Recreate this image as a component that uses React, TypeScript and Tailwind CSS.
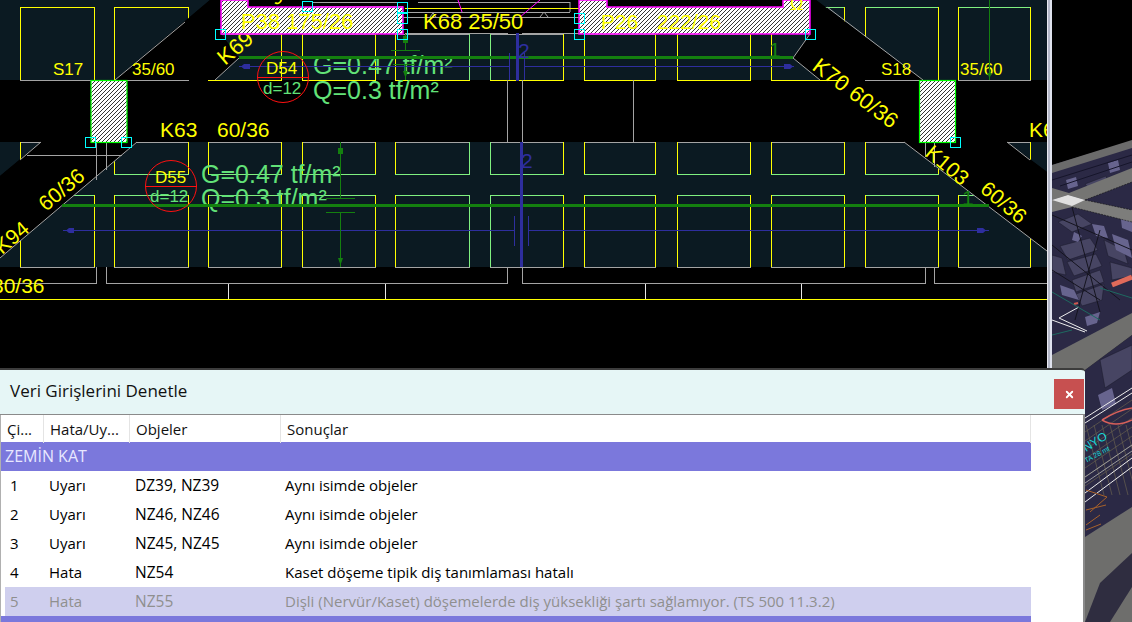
import { X } from "lucide-react"

const YEL = "#ffff00"
const LGR = "#80f080"
const GRY = "#a4a4a4"
const SLAB = "#0b1a22"
const DIM = "#14800f"
const BLU = "#2e2e9e"
const CYA = "#00ffff"
const MAG = "#ff00ff"
const TXT = "#62e278"

const cols = [
  [20, 94], [114, 188], [208, 281], [302, 375], [395, 469], [490, 563],
  [584, 655], [677, 750], [771, 844], [865, 938], [958, 1030],
]

// x0, x1, y0, y1, top, left, right, bottom
type Cell = [number, number, number, number, string, string, string, string]

function buildCells(): Cell[] {
  const out: Cell[] = []
  cols.forEach(([a, b], i) => {
    const l = i === 5 ? LGR : YEL
    const r = i === 4 ? LGR : YEL
    out.push([a, b, 142, 174, GRY, l, r, LGR])
    out.push([a, b, 195, 267, LGR, l, r, GRY])
    if (i < 2) out.push([a, b, 7, 80, YEL, YEL, YEL, GRY])
    else if (i < 8) out.push([a, b, 34, 80, GRY, l, r, YEL])
    else if (i === 8) out.push([a, b, 7, 80, LGR, YEL, YEL, YEL])
    else out.push([a, b, 7, 80, LGR, YEL, YEL, GRY])
  })
  return out
}

function CellBox({ c }: { c: Cell }) {
  const [a, b, t, u, top, l, r, bot] = c
  return (
    <g strokeWidth="1">
      <line x1={a} y1={t + 0.5} x2={b + 1} y2={t + 0.5} stroke={top} />
      <line x1={a + 0.5} y1={t} x2={a + 0.5} y2={u} stroke={l} />
      <line x1={b + 0.5} y1={t} x2={b + 0.5} y2={u} stroke={r} />
      <line x1={a} y1={u + 0.5} x2={b + 1} y2={u + 0.5} stroke={bot} />
    </g>
  )
}

function Label(props: { x: number; y: number; size: number; fill?: string; rot?: number; children: string }) {
  const { x, y, size, fill = YEL, rot, children } = props
  return (
    <text
      x={x}
      y={y}
      fontSize={size}
      fill={fill}
      className="font-['Liberation_Sans',sans-serif]"
      transform={rot ? `rotate(${rot} ${x} ${y})` : undefined}
    >
      {children}
    </text>
  )
}

const squares = [
  [215, 29], [302, 1], [397, 2], [397, 13], [397, 29], [574, 13], [574, 29], [805, 29],
  [85, 137], [121, 137], [950, 137],
]

const grayLines = [
  // plan edges
  [185, 22, 115, 80], [215, 80, 239, 58], [793, 58, 820, 80], [810, 34, 793, 58], [827, 7, 923, 80],
  [137, 142, 0, 258], [41, 142, 20, 160], [904, 142, 1047, 251], [1007, 142, 1030, 160],
  // walls between bands
  [507.5, 80, 507.5, 142], [522.5, 80, 522.5, 142], [633.5, 80, 633.5, 142],
  [507.5, 267, 507.5, 283], [522.5, 267, 522.5, 283],
  [96.5, 142, 96.5, 180], [106.5, 142, 106.5, 170], [27, 155.5, 122, 155.5],
  [925.5, 142, 925.5, 157], [934.5, 142, 934.5, 167],
  [96.5, 267, 96.5, 283.5], [0, 283.5, 97, 283.5], [106.5, 267, 106.5, 283.5], [106, 283.5, 508, 283.5],
  [522, 283.5, 926, 283.5], [925.5, 267, 925.5, 283.5], [934.5, 267, 934.5, 283.5], [934, 283.5, 1047, 283.5],
  // top gap between walls
  [405, 33.5, 508, 33.5], [522, 33.5, 579, 33.5], [313, 2.5, 403, 2.5], [313, 6.5, 403, 6.5],
  [403, 12.5, 570, 12.5], [403, 17.5, 579, 17.5], [570, 2, 570, 12], [418, 2.5, 570, 2.5],
]

function Plan() {
  return (
    <svg width="1047" height="622" viewBox="0 0 1047 622" className="block shrink-0 w-[1047px] h-[622px]">
      <defs>
        <pattern id="hatch" width="4" height="4" patternUnits="userSpaceOnUse">
          <rect width="4" height="4" fill="#fff" />
          <path d="M-1 1L1 -1M0 4L4 0M3 5L5 3" stroke="#000" strokeWidth="0.8" />
        </pattern>
      </defs>

      <polygon points="0,0 210,0 115,80 0,80" fill={SLAB} />
      <polygon points="221,34 810,34 793,58 820,80 215,80 239,58" fill={SLAB} />
      <polygon points="816,0 1047,0 1047,80 923,80" fill={SLAB} />
      <polygon points="0,142 41,142 0,176" fill={SLAB} />
      <polygon points="137,142 904,142 1047,251 1047,267 0,267 0,258" fill={SLAB} />
      <polygon points="1007,142 1047,142 1047,172" fill={SLAB} />

      {buildCells().map((c, i) => (
        <CellBox key={i} c={c} />
      ))}

      {/* beams cut over the slab cells */}
      <polygon points="210,0 221,0 221,34 239,58 215,80 115,80" fill="#000" />
      <polygon points="816,0 923,80 820,80 793,58 810,34 810,0" fill="#000" />
      <polygon points="41,142 137,142 0,258 0,176" fill="#000" />
      <polygon points="904,142 1007,142 1047,172 1047,251" fill="#000" />

      {grayLines.map((l, i) => (
        <line key={i} x1={l[0]} y1={l[1]} x2={l[2]} y2={l[3]} stroke={GRY} strokeWidth="1" />
      ))}
      <line x1="405" y1="8.5" x2="579" y2="8.5" stroke={YEL} />
      <path d="M458 0L462 12M540 0L520 17" stroke={MAG} fill="none" />
      <path d="M540 17l4 -5 4 5M430 17l3 -4 3 4" stroke={GRY} fill="none" />
      {[228.5, 385.5, 645.5, 801.5].map((x) => (
        <line key={x} x1={x} y1="284" x2={x} y2="299" stroke="#e8e8e8" />
      ))}
      <line x1="0" y1="299.5" x2="1047" y2="299.5" stroke={YEL} />

      <Label x={225} y={66} size={22} rot={-40}>K69</Label>
      <Label x={276} y={6} size={18} rot={-40}>30/36</Label>

      {/* wall hatching */}
      <polygon points="221,0 221,34 403,34 403,7 248,7 248,0" fill="url(#hatch)" stroke={MAG} strokeWidth="1.5" />
      <polygon points="579,0 579,34 810,34 810,0 783,0 783,7 607,7 607,0" fill="url(#hatch)" stroke={MAG} strokeWidth="1.5" />
      <rect x="91" y="80.5" width="36" height="62" fill="url(#hatch)" stroke="#00ff00" strokeWidth="1.2" />
      <rect x="919.5" y="80.5" width="36" height="62" fill="url(#hatch)" stroke="#00ff00" strokeWidth="1.2" />

      <Label x={241} y={29} size={22}>P38 175/26</Label>
      <Label x={601} y={29} size={21}>P26</Label>
      <Label x={657} y={29} size={21}>222/26</Label>
      <Label x={790} y={10} size={18}>Ω</Label>
      <Label x={423} y={29} size={22}>K68 25/50</Label>
      <Label x={53} y={75} size={17}>S17</Label>
      <Label x={132} y={75} size={17}>35/60</Label>
      <Label x={881} y={75} size={17}>S18</Label>
      <Label x={960} y={75} size={17}>35/60</Label>
      <Label x={160} y={137} size={21}>K63</Label>
      <Label x={217} y={137} size={21}>60/36</Label>
      <Label x={1029} y={137} size={21}>K6</Label>
      <Label x={-8} y={293} size={21}>30/36</Label>
      <Label x={2} y={255} size={21} rot={-40}>K94</Label>
      <Label x={46} y={212} size={21} rot={-40}>60/36</Label>
      <Label x={811} y={69} size={22} rot={37}>K70 60/36</Label>
      <Label x={924} y={155} size={21} rot={40}>K103</Label>
      <Label x={979} y={191} size={21} rot={40}>60/36</Label>

      <Label x={313} y={74} size={25} fill={TXT}>G=0.47 tf/m²</Label>
      <Label x={313} y={99} size={25} fill={TXT}>Q=0.3 tf/m²</Label>
      <Label x={201} y={183} size={25} fill={TXT}>G=0.47 tf/m²</Label>
      <Label x={201} y={207} size={25} fill={TXT}>Q=0.3 tf/m²</Label>

      {/* slab span lines */}
      <rect x="239" y="56" width="554" height="3" fill={DIM} />
      <rect x="62" y="204" width="927" height="3" fill={DIM} />
      <line x1="239" y1="66.5" x2="509" y2="66.5" stroke={BLU} />
      <line x1="524" y1="66.5" x2="794" y2="66.5" stroke={BLU} />
      <line x1="63" y1="230.5" x2="514" y2="230.5" stroke={BLU} />
      <line x1="528" y1="230.5" x2="989" y2="230.5" stroke={BLU} />
      <path d="M241 66.5l3 -2.5h6v5h-6zM793 66.5l-3 -2.5h-6v5h6zM66 230.5l3 -2.5h5v5h-5zM986 230.5l-3 -2.5h-6v5h6z" fill={BLU} />
      <path d="M509.5 53V80M524.5 53V80M514.5 216V246M528.5 216V246" stroke={BLU} fill="none" />
      <rect x="516" y="33" width="3" height="48" fill={BLU} />
      <rect x="520" y="142" width="3" height="125" fill={BLU} />
      <Label x={518} y={58} size={21} fill={BLU}>2</Label>
      <Label x={521} y={168} size={21} fill={BLU}>2</Label>
      <Label x={769} y={57} size={21} fill={DIM}>1</Label>
      <Label x={962} y={205} size={21} fill={DIM}>1</Label>

      {/* vertical spans */}
      <path
        d="M405.5 34V50M391 50.5H420M393 64.5H415M405.5 64V80M340.5 142V198M326 198.5H355M326 212.5H355M340.5 212V267M989.5 0V80"
        stroke={DIM}
        fill="none"
      />
      <path d="M403 36h5v7h-5zM403 71h5l-2.5 7zM338 148h5v6h-5zM338 258h5l-2.5 7zM987 73h5l-2.5 5z" fill={DIM} />

      {/* section circles */}
      <Label x={266} y={74} size={17}>D54</Label>
      <Label x={263} y={94} size={17} fill={TXT}>d=12</Label>
      <circle cx="283" cy="77" r="25.5" fill="none" stroke="#ff1010" />
      <line x1="257.5" y1="77.5" x2="308.5" y2="77.5" stroke="#ff1010" />
      <Label x={155} y={183} size={17}>D55</Label>
      <Label x={150} y={202} size={17} fill={TXT}>d=12</Label>
      <circle cx="171" cy="186" r="25.5" fill="none" stroke="#ff1010" />
      <line x1="145.5" y1="186.5" x2="196.5" y2="186.5" stroke="#ff1010" />

      {squares.map(([x, y], i) => (
        <rect key={i} x={x + 0.5} y={y + 0.5} width="10" height="10" fill="none" stroke={CYA} />
      ))}
    </svg>
  )
}

const lightBlocks = [
  "1066,180 1076,177 1078,186 1068,189",
  "1108,163 1118,160 1120,170 1110,173",
  "1120,212 1132,216 1132,232 1122,228",
  "1092,224 1104,226 1108,238 1096,236",
  "1074,232 1082,236 1078,242 1072,240",
  "1085,317 1100,312 1097,323 1087,326",
  "1060,285 1074,290 1079,300 1062,295",
  "1112,234 1128,240 1132,258 1116,250",
  "1098,395 1112,388 1116,404 1102,410",
]
const midBlocks = [
  "1058,222 1078,214 1092,224 1072,232",
  "1060,246 1090,238 1098,250 1068,260",
  "1067,262 1096,254 1102,266 1074,276",
  "1072,280 1100,270 1104,282 1076,292",
  "1076,294 1104,284 1102,300 1082,306",
  "1104,240 1124,250 1128,264 1108,256",
  "1052,255 1062,258 1066,275 1052,272",
  "1110,262 1132,268 1132,276 1112,280",
  "1085,184 1106,176 1108,182 1090,190",
  "1100,360 1132,345 1132,370 1105,388",
]

function Model() {
  const grid: string[] = []
  for (let i = 0; i < 7; i++) {
    grid.push(`M1085 ${432 + i * 9}L1132 ${400 + i * 9}`)
    grid.push(`M${1086 + i * 8} 425L${1104 + i * 8} 495`)
  }
  return (
    <svg width="80" height="622" viewBox="1052 0 80 622" className="block shrink-0 w-[80px] h-[622px]">
      <rect x="1052" width="80" height="622" fill="#000" />
      {/* purple floor */}
      <polygon points="1052,165 1132,141 1132,320 1052,360" fill="#2b2945" />
      <polygon points="1085,370 1132,335 1132,510 1085,540" fill="#2b2945" />
      {midBlocks.map((p) => (
        <polygon key={p} points={p} fill="#474563" stroke="#1b1a2a" strokeWidth="0.5" />
      ))}
      {lightBlocks.map((p) => (
        <polygon key={p} points={p} fill="#67648e" />
      ))}
      <path d="M1052 215L1132 250M1052 245L1120 300M1052 270L1100 300M1072 207L1100 312M1100 230L1075 320" stroke="#15141f" fill="none" />
      <path d="M1052 180L1132 155M1060 186L1132 162" stroke="#16152a" fill="none" />

      {/* beams */}
      <polygon points="1052,165 1132,140 1132,148 1052,173" fill="#6b6b6b" />
      <polygon points="1052,188 1069,193 1132,168 1132,182 1085,200 1068,195 1052,200" fill="#757573" />
      <polygon points="1085,200 1132,210 1132,222 1072,207 1052,212 1052,200 1068,195" fill="#7d7d7b" />
      <polygon points="1052,200 1068,195 1085,200 1072,206" fill="#e0e0e0" />
      <path d="M1085 200L1132 210M1072 207L1132 222M1085 200L1132 182" stroke="#111" strokeWidth="0.6" strokeDasharray="2 1" fill="none" />
      <polygon points="1052,355 1132,313 1132,335 1085,370 1052,372" fill="#6f6f6d" />
      <polygon points="1085,537 1132,507 1132,622 1085,622" fill="#6e6e6c" />
      <polygon points="1100,583 1132,553 1132,587 1110,622 1085,622" fill="#2f2d40" />

      <path d={grid.join("")} stroke="#67604f" strokeWidth="0.7" fill="none" />
      <path d="M1112 285L1132 277" stroke="#e06a5a" strokeWidth="5" fill="none" />
      <path d="M1079 307L1059 318L1087 331M1052 320L1085 332" stroke="#eee" fill="none" />
      <line x1="1074" y1="304" x2="1078" y2="303" stroke="#d05a50" strokeWidth="2" />
      <path d="M1052 335L1072 330M1100 288L1132 298M1052 292L1100 320" stroke="#1e6a60" fill="none" />

      <path d="M1085 418L1132 388M1085 423L1132 393M1085 493L1132 458M1085 502L1132 467" stroke="#ededed" fill="none" />
      <path d="M1085 477L1132 445M1085 483L1132 451" stroke="#9a9a9a" fill="none" />
      <path d="M1102 420Q1115 428 1132 420M1132 408Q1118 410 1102 420" stroke="#d8605a" strokeWidth="1.5" fill="none" />
      <path d="M1086 490L1107 497L1090 512M1086 510L1106 505M1086 525L1100 515M1086 530L1101 524" stroke="#a8622a" fill="none" />
      <Label x={1086} y={452} size={12} fill="#18d8d8" rot={-32}>NYO</Label>
      <Label x={1086} y={463} size={7} fill="#18d8d8" rot={-28}>TA 28 mt</Label>
    </svg>
  )
}

const rows = [
  { no: "1", kind: "Uyarı", objs: "DZ39, NZ39", msg: "Aynı isimde objeler" },
  { no: "2", kind: "Uyarı", objs: "NZ46, NZ46", msg: "Aynı isimde objeler" },
  { no: "3", kind: "Uyarı", objs: "NZ45, NZ45", msg: "Aynı isimde objeler" },
  { no: "4", kind: "Hata", objs: "NZ54", msg: "Kaset döşeme tipik diş tanımlaması hatalı" },
  {
    no: "5",
    kind: "Hata",
    objs: "NZ55",
    msg: "Dişli (Nervür/Kaset) döşemelerde diş yüksekliği şartı sağlamıyor. (TS 500 11.3.2)",
    selected: true,
  },
]

function CheckDialog() {
  return (
    <div className="absolute left-0 top-[368px] w-[1085px] h-[254px] flex flex-col border-t-2 border-t-[#3c3c3c] rounded-tr-[4px] overflow-hidden font-['Open_Sans',sans-serif]">
      <div className="h-[45px] shrink-0 flex items-start justify-between bg-[#e6f6f6] pl-[10px] pr-px border-b border-b-[#8a8a8a]">
        <span className="mt-[10px] text-[17px] leading-[22px] text-[#111]">Veri Girişlerini Denetle</span>
        <button className="mt-[9px] w-[30px] h-[30px] flex items-center justify-center bg-[#c75050] text-white">
          <X size={11} strokeWidth={4} />
        </button>
      </div>
      <div className="flex-1 bg-white border-r-2 border-r-[#8a8a8a] border-l border-l-[#b0b0b0] text-[15px]">
        <div className="w-[1030px] h-[27px] grid grid-cols-[43px_86px_151px_1fr] items-center text-[#111]">
          <span className="h-full pl-[6px] leading-[28px] border-r border-r-[#e4e4e4]">Çi...</span>
          <span className="h-full pl-[6px] leading-[28px] border-r border-r-[#e4e4e4]">Hata/Uy...</span>
          <span className="h-full pl-[6px] leading-[28px] border-r border-r-[#e4e4e4]">Objeler</span>
          <span className="h-full pl-[6px] leading-[28px] border-r border-r-[#e4e4e4]">Sonuçlar</span>
        </div>
        <div className="w-[1030px] h-[29px] pl-1 text-[16px] leading-[28px] bg-[#7b78dc] text-[#e8e8ff]">ZEMİN KAT</div>
        {rows.map((r) => (
          <div
            key={r.no}
            className={
              r.selected
                ? "w-[1026px] ml-1 h-[29px] pl-[5px] grid grid-cols-[39px_86px_150px_1fr] leading-[29px] bg-[#cfcfee] text-[#8f8f8f]"
                : "w-[1026px] ml-1 h-[29px] pl-[5px] grid grid-cols-[39px_86px_150px_1fr] leading-[29px] text-black"
            }
          >
            <span>{r.no}</span>
            <span>{r.kind}</span>
            <span className="text-[15.5px]">{r.objs}</span>
            <span>{r.msg}</span>
          </div>
        ))}
        <div className="w-[1030px] h-[29px] bg-[#7b78dc]" />
      </div>
    </div>
  )
}

export default function App() {
  return (
    <div className="relative w-[1132px] h-[622px] overflow-hidden bg-black flex">
      <Plan />
      <div className="w-[5px] h-full shrink-0 flex">
        <div className="w-px bg-[#e8e8f0]" />
        <div className="w-[2px] bg-[#b4b8c8]" />
        <div className="w-[2px] bg-[#dfe2ee]" />
      </div>
      <Model />
      <CheckDialog />
    </div>
  )
}
